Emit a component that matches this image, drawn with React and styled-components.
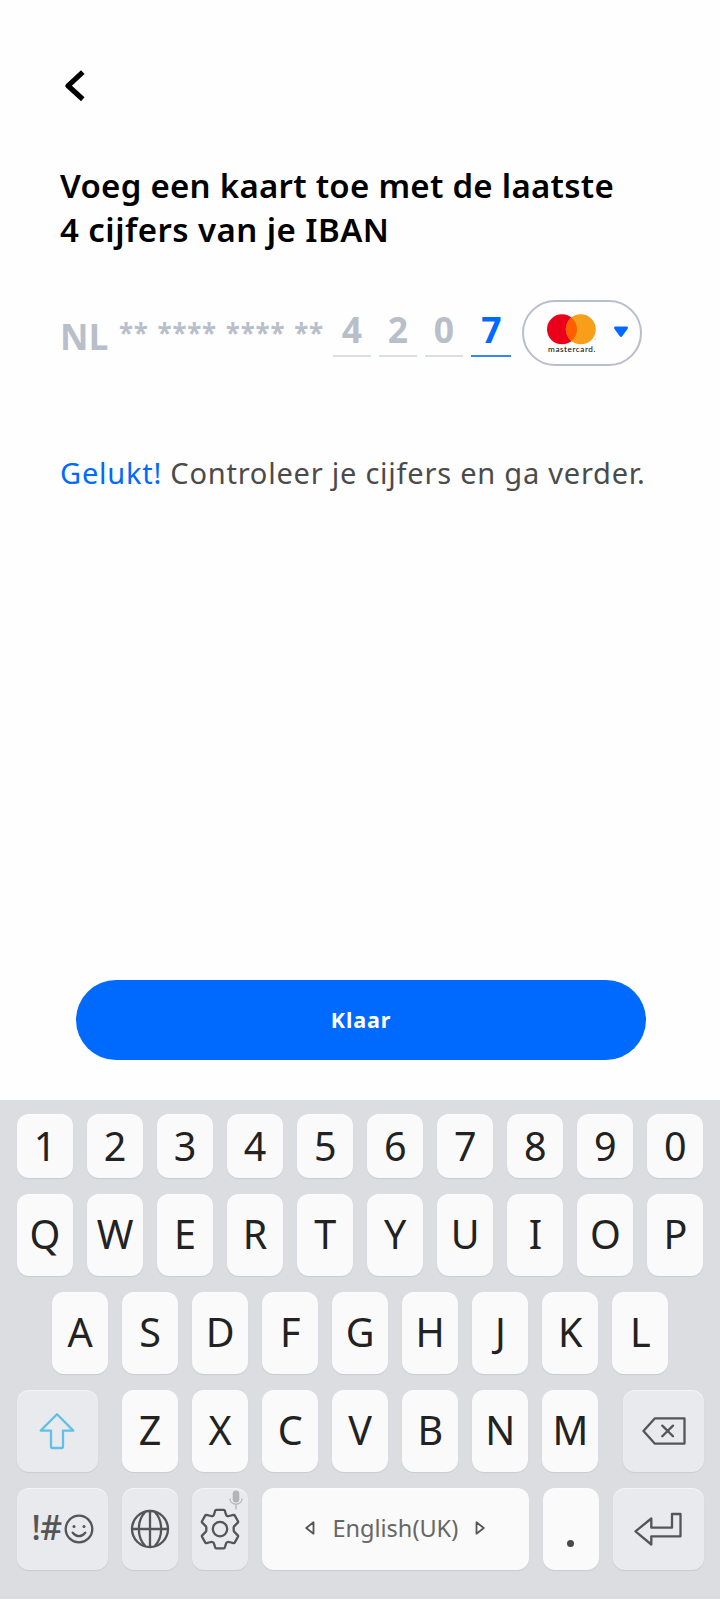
import React from "react";
import styled, { createGlobalStyle } from "styled-components";

const GlobalStyle = createGlobalStyle`
  * { box-sizing: border-box; }
  body { margin: 0; background: #fefefe; font-family: "Noto Sans", "Open Sans", sans-serif; }
  button { font: inherit; border: 0; padding: 0; background: none; }
  svg { display: block; }
`;

const Screen = styled.main`
  width: 720px;
  height: 1600px;
  display: flex;
  flex-direction: column;
  overflow: hidden;
  background: #fefefe;
`;

const TopBar = styled.header`
  height: 164px;
  padding: 68px 0 0 62px;
`;

const Content = styled.section`
  height: 816px;
  padding-left: 60px;
`;

const Title = styled.h1`
  margin: 0;
  font-size: 33px;
  line-height: 44px;
  font-weight: 600;
  color: #000;
  white-space: nowrap;
`;

const TitleLine = styled.span`
  display: block;
  letter-spacing: ${(p) => p.$spacing}px;
`;

const IbanRow = styled.div`
  display: flex;
  height: 66px;
  margin-top: 48px;
  color: #b8bfca;
  font-weight: 700;
`;

const Country = styled.span`
  width: 59px;
  font-size: 35px;
  line-height: 74px;
  letter-spacing: 0.2px;
`;

const Mask = styled.span`
  width: 214px;
  font-size: 26px;
  line-height: 66px;
  letter-spacing: 0.75px;
  word-spacing: 1.4px;
  white-space: nowrap;
`;

const Digits = styled.div`
  display: flex;
  gap: 8.5px;
  width: 189px;
`;

const Digit = styled.span`
  width: ${(p) => (p.$active ? 40 : 37.6)}px;
  height: 57px;
  font-size: 35.5px;
  line-height: 58px;
  text-align: center;
  color: ${(p) => (p.$active ? "#006aff" : "#b8bfca")};
  border-bottom: 2px solid ${(p) => (p.$active ? "#3385ff" : "#dadfe6")};
`;

const CardPicker = styled.button`
  display: flex;
  align-items: center;
  width: 120px;
  height: 66px;
  padding-left: 22px;
  border: 2px solid #b8bfca;
  border-radius: 33px;
`;

const Brand = styled.span`
  display: flex;
  flex-direction: column;
  align-items: center;
  width: 50px;
  margin: 0 18px 0 0;
`;

const BrandName = styled.span`
  padding-left: 2px;
  font: 400 8.2px/8px "Lato", sans-serif;
  letter-spacing: 0.55px;
  color: #000;
`;

const Message = styled.p`
  margin: 87px 0 0;
  font-size: 29px;
  line-height: 40px;
  letter-spacing: 0.77px;
  color: #4b4b4b;
  white-space: nowrap;
`;

const Accent = styled.span`
  color: #006aff;
`;

const Action = styled.button`
  width: 570px;
  height: 80px;
  margin: 0 0 40px 76px;
  border-radius: 40px;
  background: #006aff;
  color: #fff;
  font-size: 21.5px;
  font-weight: 700;
  line-height: 80px;
  letter-spacing: 0.9px;
  flex: none;
`;

const Keyboard = styled.section`
  height: 499px;
  padding: 13.6px 0 0 17px;
  background: #dcdde1;
  display: flex;
  flex-direction: column;
  gap: 16px;
  flex: none;
`;

const KeyRow = styled.div`
  display: flex;
  gap: 14.06px;
  height: ${(p) => (p.$short ? 64.2 : 82)}px;
  padding-left: ${(p) => p.$indent || 0}px;
`;

const Key = styled.button`
  display: flex;
  align-items: center;
  justify-content: center;
  flex: none;
  width: ${(p) => p.$width || 56}px;
  height: 100%;
  margin: 0 ${(p) => p.$after || 0}px 0 ${(p) => p.$before || 0}px;
  padding-bottom: ${(p) => (p.$soft || p.$short ? 0 : 2)}px;
  border-radius: 12px;
  background: ${(p) => (p.$soft ? "#e9eaee" : "#fafafa")};
  box-shadow: 0 1px 1px #c9cbd0, inset 0 1px 1px #ffffff88;
  color: #222;
  font-size: 39.5px;
  line-height: 50px;
  position: relative;
`;

const Symbols = styled.span`
  font-size: 34px;
  font-weight: 500;
  letter-spacing: -0.6px;
  color: #555;
  margin: -3px 2px 0 0;
`;

const Language = styled.span`
  margin: 0 17px;
  padding-top: 1px;
  font-size: 23.5px;
  color: #666;
`;

const Period = styled.span`
  width: 7px;
  height: 7px;
  margin-top: 32px;
  border-radius: 50%;
  background: #484848;
`;

const MicBadge = styled.span`
  position: absolute;
  top: 2px;
  right: 5px;
`;

const Line = ({ w, h, d, color = "#555", width = 2.3, children }) => (
  <svg width={w} height={h} viewBox={`0 0 ${w} ${h}`} fill="none" stroke={color} strokeWidth={width} strokeLinejoin="round" strokeLinecap="round">
    {d && <path d={d} />}
    {children}
  </svg>
);

const Back = () => (
  <svg width="26" height="36" fill="none" stroke="#000" strokeWidth="5.2">
    <path d="M20.8 4.2 6 17.8 20.8 31.2" strokeLinejoin="round" />
  </svg>
);

const Circles = () => (
  <svg width="50" height="31">
    <circle cx="16" cy="15.3" r="15" fill="#eb001b" />
    <circle cx="34.8" cy="15.3" r="15" fill="#f79e1b" />
    <path d="M25.4 3.6a15 15 0 0 1 0 23.4 15 15 0 0 1 0-23.4Z" fill="#ff5f00" />
    <circle cx="49.2" cy="25" r=".6" fill="#f79e1b" />
  </svg>
);

const Caret = () => (
  <svg width="14" height="14" fill="#006aff">
    <path d="M1.4 .5h11.2c1.3 0 1.7 1.4.9 2.4L8.4 10.1q-1.4 1.8-2.8 0L.5 2.9C-.3 1.9.1.5 1.4.5Z" />
  </svg>
);

const Smile = () => (
  <Line w={30} h={30}>
    <circle cx="15" cy="15" r="13.3" />
    <path d="M8.7 18.7q6.3 7 12.6 0" />
    <circle cx="10" cy="12.5" r="1.5" fill="#555" stroke="none" />
    <circle cx="20" cy="12.5" r="1.5" fill="#555" stroke="none" />
  </Line>
);

const Globe = () => (
  <Line w={40} h={40}>
    <circle cx="20" cy="20" r="18" />
    <path d="M2 20h36M20 2v36M15 3.3C6.8 12 6.8 28 15 36.7M25 3.3c8.2 8.7 8.2 24.7 0 33.4" />
  </Line>
);

const Gear = () => (
  <Line w={40} h={42}>
    <path d="M16.2 1.9h7.6q.8 0 1 .8l1.3 4.1q.2.8 1 1.1 1 .5 1.8.1l4.6-1.1q.8-.2 1.2.5l3.3 5.9q.4.7-.2 1.3l-3.5 3.5q-.6.6-.6 1.4v3q0 .8.6 1.4l3.5 3.5q.6.6.2 1.3l-3.3 5.9q-.4.7-1.2.5L28.9 34q-.8-.2-1.8.3-.8.3-1 1.1l-1.3 4.1q-.2.8-1 .8h-7.6q-.8 0-1-.8l-1.3-4.1q-.2-.8-1-1.1-1-.5-1.8-.3l-4.6 1.1q-.8.2-1.2-.5L2 28.7q-.4-.7.2-1.3l3.5-3.5q.6-.6.6-1.4v-3q0-.8-.6-1.4l-3.5-3.5q-.6-.6-.2-1.3l3.3-5.9q.4-.7 1.2-.5L11.1 8q.8.4 1.8-.1.8-.3 1-1.1l1.3-4.1q.2-.8 1-.8Z" />
    <circle cx="20" cy="21.1" r="7.2" />
  </Line>
);

const Mic = () => (
  <svg width="14" height="20" fill="none" stroke="#b8b9bb" strokeWidth="1.4">
    <rect x="3.7" y=".5" width="6.6" height="12" rx="3.3" fill="#b3b4b6" stroke="none" />
    <path d="M1 8.5c0 7.5 12 7.5 12 0M7 14v5.5" />
  </svg>
);

const Letters = ({ text, short }) => [...text].map((c) => <Key key={c} $short={short}>{c}</Key>);

export default function App() {
  return (
    <Screen>
      <GlobalStyle />
      <TopBar>
        <button aria-label="Terug"><Back /></button>
      </TopBar>
      <Content>
        <Title>
          <TitleLine $spacing={0.27}>Voeg een kaart toe met de laatste</TitleLine>
          <TitleLine $spacing={0.45}>4 cijfers van je IBAN</TitleLine>
        </Title>
        <IbanRow>
          <Country>NL</Country>
          <Mask>** **** **** **</Mask>
          <Digits>
            <Digit>4</Digit>
            <Digit>2</Digit>
            <Digit>0</Digit>
            <Digit $active>7</Digit>
          </Digits>
          <CardPicker>
            <Brand>
              <Circles />
              <BrandName>mastercard.</BrandName>
            </Brand>
            <Caret />
          </CardPicker>
        </IbanRow>
        <Message><Accent>Gelukt!</Accent> Controleer je cijfers en ga verder.</Message>
      </Content>
      <Action>Klaar</Action>
      <Keyboard>
        <KeyRow $short><Letters short text="1234567890" /></KeyRow>
        <KeyRow><Letters text="QWERTYUIOP" /></KeyRow>
        <KeyRow $indent={35}><Letters text="ASDFGHJKL" /></KeyRow>
        <KeyRow>
          <Key $soft $width={80.7} $after={10.3}>
            <Line w={36} h={38} color="#62c0e8" d="M18 2.2 34.3 18.6H24V34.5q0 1.5-1.5 1.5h-9q-1.5 0-1.5-1.5V18.6H1.7Z" />
          </Key>
          <Letters text="ZXCVBNM" />
          <Key $soft $width={80.7} $before={10.9}>
            <Line w={44} h={28} d="M12.7 1.4H42.5V26.6H12.7L1.5 14ZM20.3 8.6l10.7 10.7M31 8.6 20.3 19.3" />
          </Key>
        </KeyRow>
        <KeyRow>
          <Key $soft $width={91}>
            <Symbols>!#</Symbols>
            <Smile />
          </Key>
          <Key $soft><Globe /></Key>
          <Key $soft>
            <Gear />
            <MicBadge><Mic /></MicBadge>
          </Key>
          <Key $width={266.4}>
            <Line w={10} h={14} width={1.8} d="M8.5 1.3v11.4L1.2 7Z" />
            <Language>English(UK)</Language>
            <Line w={10} h={14} width={1.8} d="M1.5 1.3v11.4L8.8 7Z" />
          </Key>
          <Key><Period /></Key>
          <Key $soft $width={91}>
            <Line w={48} h={34} d="M17.3 6.5V15.7H38V2H46.5V24.3H17.3V32.5L1.5 19.3Z" />
          </Key>
        </KeyRow>
      </Keyboard>
    </Screen>
  );
}
